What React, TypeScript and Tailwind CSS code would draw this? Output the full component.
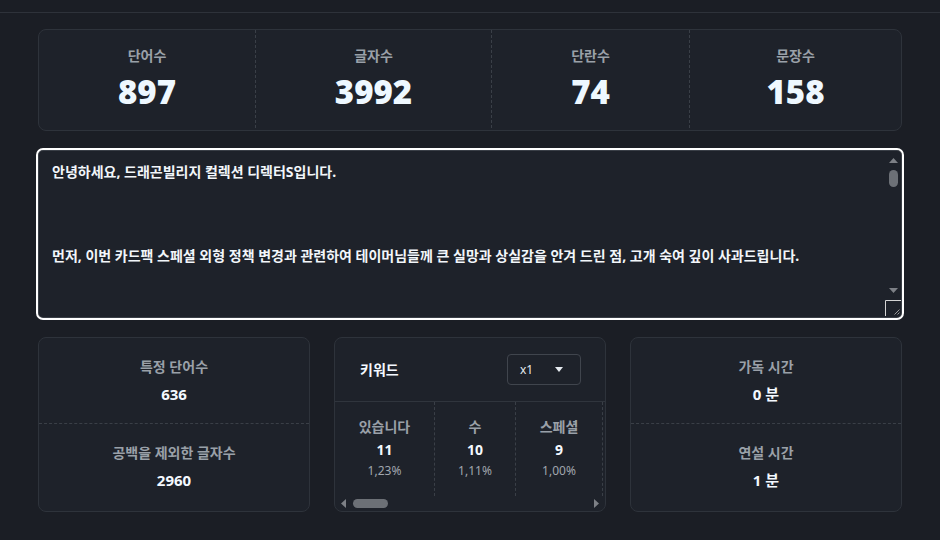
import React from "react";

const stats = [
  { label: "단어수", value: "897", w: "w-[217px]" },
  { label: "글자수", value: "3992", w: "w-[236px]" },
  { label: "단란수", value: "74", w: "w-[198px]" },
  { label: "문장수", value: "158", w: "flex-1" },
];

// only the columns that are in view; the rest sit behind the horizontal scroll
const keywords = [
  { word: "있습니다", count: 11, pct: "1,23%", w: "w-[100px]" },
  { word: "수", count: 10, pct: "1,11%", w: "w-[81px]" },
  { word: "스페셜", count: 9, pct: "1,00%", w: "w-[87px]" },
];

const text =
  "안녕하세요, 드래곤빌리지 컬렉션 디렉터S입니다.\n\n\n\n먼저, 이번 카드팩 스페셜 외형 정책 변경과 관련하여 테이머님들께 큰 실망과 상실감을 안겨 드린 점, 고개 숙여 깊이 사과드립니다.";

function SplitCard({ rows }: { rows: { label: string; value: string }[] }) {
  return (
    <div className="flex flex-col rounded-lg border border-[#2e333b] bg-[#1e222a]">
      {rows.map((r, i) => (
        <div
          key={r.label}
          className={`flex h-[86px] flex-col items-center justify-center gap-[8px] ${
            i === 0 ? "border-b border-dashed border-[#3a3f47]" : ""
          }`}
        >
          <div className="text-[14px] font-bold leading-[18px] text-[#9aa0a8]">{r.label}</div>
          <div className="text-[15px] font-bold leading-[20px] text-[#f4f9ff]">{r.value}</div>
        </div>
      ))}
    </div>
  );
}

function VScrollbar() {
  return (
    <div className="pointer-events-none absolute bottom-[2px] right-[1px] top-[1px] flex w-[16px] flex-col items-center">
      <svg width="9" height="5" viewBox="0 0 9 5" className="mt-[7px]">
        <path d="M4.5 0L9 5H0z" fill="#7d8086" />
      </svg>
      <div className="ml-[1px] mt-[7px] h-[17px] w-[9px] rounded-full bg-[#6c7076]" />
      <div className="flex-1" />
      <svg width="9" height="5" viewBox="0 0 9 5">
        <path d="M0 0h9L4.5 5z" fill="#7d8086" />
      </svg>
      <svg width="16" height="16" viewBox="0 0 16 16" className="mt-[7px]">
        <path d="M0.5 16V0.5H16" fill="none" stroke="#d4d4d4" />
        <path d="M14.5 9.5L9.5 14.5M14.5 12.5L12.5 14.5" stroke="#9a9a9a" />
      </svg>
    </div>
  );
}

function HScrollbar() {
  return (
    <div className="flex h-[15px] shrink-0 items-center px-[6px]">
      <svg width="5" height="9" viewBox="0 0 5 9">
        <path d="M0 4.5L5 0v9z" fill="#7d8086" />
      </svg>
      <div className="ml-[7px] h-[9px] w-[35px] rounded-full bg-[#6c7076]" />
      <div className="flex-1" />
      <svg width="5" height="9" viewBox="0 0 5 9">
        <path d="M5 4.5L0 0v9z" fill="#7d8086" />
      </svg>
    </div>
  );
}

export default function App() {
  return (
    <div
      className="min-h-[540px] w-[940px] bg-[#1b1e25]"
      style={{ fontFamily: '"Noto Sans", "Noto Sans CJK KR", sans-serif' }}
    >
      <div className="h-[13px] border-b border-[#2e323a]" />

      <div className="px-[38px] pt-[16px]">
        {/* summary */}
        <div className="flex h-[102px] rounded-lg border border-[#2e333b] bg-[#1e222a] pb-[2px]">
          {stats.map((s, i) => (
            <div
              key={s.label}
              className={`${s.w} flex flex-col items-center justify-center gap-[7px] ${
                i < stats.length - 1 ? "border-r border-dashed border-[#3a3f47]" : ""
              }`}
            >
              <div className="text-[14px] font-bold leading-[18px] text-[#9aa0a8]">{s.label}</div>
              <div className="text-[33px] font-black leading-[40px] text-[#eef8ff]">{s.value}</div>
            </div>
          ))}
        </div>

        {/* editor */}
        <div className="relative mt-[19px]">
          <textarea
            readOnly
            defaultValue={text}
            className="block h-[168px] w-full resize-none overflow-hidden rounded-[5px] border border-[#3a3f47] bg-[#1e222a] pl-[13px] pr-[24px] pt-[10px] text-[14px] font-bold leading-[21px] text-[#f2f6fa] outline-2 outline-white"
          />
          <VScrollbar />
        </div>

        {/* bottom */}
        <div className="mt-[19px] grid grid-cols-3 gap-[24px]">
          <SplitCard
            rows={[
              { label: "특정 단어수", value: "636" },
              { label: "공백을 제외한 글자수", value: "2960" },
            ]}
          />

          <div className="flex h-[175px] flex-col overflow-hidden rounded-lg border border-[#2e333b] bg-[#1e222a]">
            <div className="flex h-[64px] shrink-0 items-center justify-between border-b border-[#30353d] pl-[25px] pr-[24px]">
              <span className="text-[14px] font-bold text-[#f4f9ff]">키워드</span>
              <div className="flex h-[31px] w-[74px] items-center justify-between rounded-[4px] border border-[#40454d] pl-[12px] pr-[17px]">
                <span className="text-[12px] text-[#e6ebf0]">x1</span>
                <svg width="8" height="5" viewBox="0 0 8 5">
                  <path d="M0 0h8L4 5z" fill="#e6ebf0" />
                </svg>
              </div>
            </div>
            <div className="flex flex-1">
              {keywords.map((k) => (
                <div
                  key={k.word}
                  className={`${k.w} flex shrink-0 flex-col items-center border-r border-dashed border-[#3a3f47] pt-[16px]`}
                >
                  <div className="whitespace-nowrap text-[14px] font-bold leading-[18px] text-[#9aa0a8]">{k.word}</div>
                  <div className="mt-[4px] text-[14px] font-bold leading-[19px] text-[#f4f9ff]">{k.count}</div>
                  <div className="mt-[3px] text-[12px] leading-[17px] text-[#a0a6ae]">{k.pct}</div>
                </div>
              ))}
            </div>
            <HScrollbar />
          </div>

          <SplitCard
            rows={[
              { label: "가독 시간", value: "0 분" },
              { label: "연설 시간", value: "1 분" },
            ]}
          />
        </div>
      </div>
    </div>
  );
}
